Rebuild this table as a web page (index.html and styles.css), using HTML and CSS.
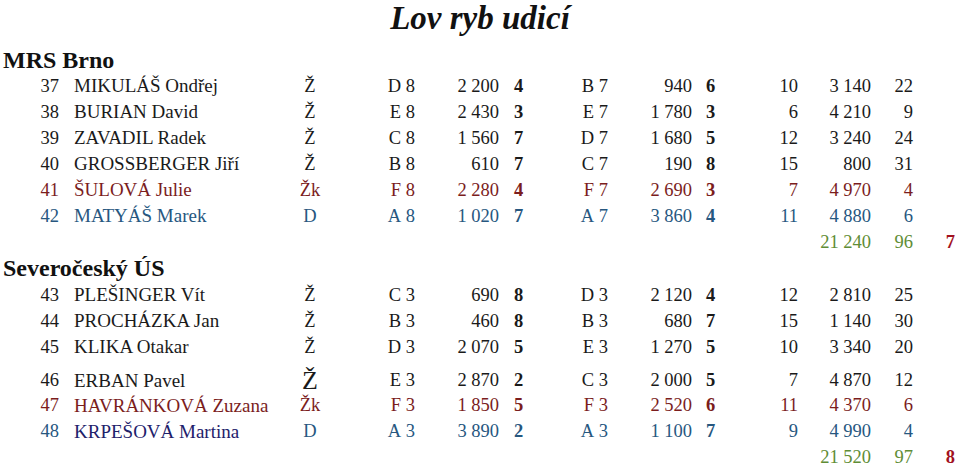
FILE: index.html
```html
<!DOCTYPE html>
<html lang="cs">
<head>
<meta charset="utf-8">
<title>Lov ryb udicí</title>
<link rel="stylesheet" href="styles.css">
</head>
<body>
<h1 class="title">Lov ryb udicí</h1>
<main class="results">
<div class="team">MRS Brno</div>
<div class="row k"><span class="r">37</span><span class="who">MIKULÁŠ Ondřej</span><span class="c">Ž</span><span class="r">D&nbsp;8</span><span class="r">2&nbsp;200</span><span class="pl">4</span><span class="r">B&nbsp;7</span><span class="r">940</span><span class="pl">6</span><span class="r">10</span><span class="r">3&nbsp;140</span><span class="r">22</span></div>
<div class="row k"><span class="r">38</span><span class="who">BURIAN David</span><span class="c">Ž</span><span class="r">E&nbsp;8</span><span class="r">2&nbsp;430</span><span class="pl">3</span><span class="r">E&nbsp;7</span><span class="r">1&nbsp;780</span><span class="pl">3</span><span class="r">6</span><span class="r">4&nbsp;210</span><span class="r">9</span></div>
<div class="row k"><span class="r">39</span><span class="who">ZAVADIL Radek</span><span class="c">Ž</span><span class="r">C&nbsp;8</span><span class="r">1&nbsp;560</span><span class="pl">7</span><span class="r">D&nbsp;7</span><span class="r">1&nbsp;680</span><span class="pl">5</span><span class="r">12</span><span class="r">3&nbsp;240</span><span class="r">24</span></div>
<div class="row k"><span class="r">40</span><span class="who">GROSSBERGER Jiří</span><span class="c">Ž</span><span class="r">B&nbsp;8</span><span class="r">610</span><span class="pl">7</span><span class="r">C&nbsp;7</span><span class="r">190</span><span class="pl">8</span><span class="r">15</span><span class="r">800</span><span class="r">31</span></div>
<div class="row w"><span class="r">41</span><span class="who">ŠULOVÁ Julie</span><span class="c">Žk</span><span class="r">F&nbsp;8</span><span class="r">2&nbsp;280</span><span class="pl">4</span><span class="r">F&nbsp;7</span><span class="r">2&nbsp;690</span><span class="pl">3</span><span class="r">7</span><span class="r">4&nbsp;970</span><span class="r">4</span></div>
<div class="row j"><span class="r">42</span><span class="who">MATYÁŠ Marek</span><span class="c">D</span><span class="r">A&nbsp;8</span><span class="r">1&nbsp;020</span><span class="pl">7</span><span class="r">A&nbsp;7</span><span class="r">3&nbsp;860</span><span class="pl">4</span><span class="r">11</span><span class="r">4&nbsp;880</span><span class="r">6</span></div>
<div class="row sum"><span class="r first">21&nbsp;240</span><span class="r">96</span><span class="rank">7</span></div>
<div class="team team2">Severočeský ÚS</div>
<div class="row k"><span class="r">43</span><span class="who">PLEŠINGER Vít</span><span class="c">Ž</span><span class="r">C&nbsp;3</span><span class="r">690</span><span class="pl">8</span><span class="r">D&nbsp;3</span><span class="r">2&nbsp;120</span><span class="pl">4</span><span class="r">12</span><span class="r">2&nbsp;810</span><span class="r">25</span></div>
<div class="row k"><span class="r">44</span><span class="who">PROCHÁZKA Jan</span><span class="c">Ž</span><span class="r">B&nbsp;3</span><span class="r">460</span><span class="pl">8</span><span class="r">B&nbsp;3</span><span class="r">680</span><span class="pl">7</span><span class="r">15</span><span class="r">1&nbsp;140</span><span class="r">30</span></div>
<div class="row k"><span class="r">45</span><span class="who">KLIKA Otakar</span><span class="c">Ž</span><span class="r">D&nbsp;3</span><span class="r">2&nbsp;070</span><span class="pl">5</span><span class="r">E&nbsp;3</span><span class="r">1&nbsp;270</span><span class="pl">5</span><span class="r">10</span><span class="r">3&nbsp;340</span><span class="r">20</span></div>
<div class="row k tall"><span class="r">46</span><span class="who">ERBAN Pavel</span><span class="c big">Ž</span><span class="r">E&nbsp;3</span><span class="r">2&nbsp;870</span><span class="pl">2</span><span class="r">C&nbsp;3</span><span class="r">2&nbsp;000</span><span class="pl">5</span><span class="r">7</span><span class="r">4&nbsp;870</span><span class="r">12</span></div>
<div class="row w tight"><span class="r">47</span><span class="who">HAVRÁNKOVÁ Zuzana</span><span class="c">Žk</span><span class="r">F&nbsp;3</span><span class="r">1&nbsp;850</span><span class="pl">5</span><span class="r">F&nbsp;3</span><span class="r">2&nbsp;520</span><span class="pl">6</span><span class="r">11</span><span class="r">4&nbsp;370</span><span class="r">6</span></div>
<div class="row j tight"><span class="r">48</span><span class="who navy">KRPEŠOVÁ Martina</span><span class="c">D</span><span class="r">A&nbsp;3</span><span class="r">3&nbsp;890</span><span class="pl">2</span><span class="r">A&nbsp;3</span><span class="r">1&nbsp;100</span><span class="pl">7</span><span class="r">9</span><span class="r">4&nbsp;990</span><span class="r">4</span></div>
<div class="row sum"><span class="r first">21&nbsp;520</span><span class="r">97</span><span class="rank">8</span></div>
</main>
</body>
</html>
```

FILE: styles.css
```css
html, body {
  margin: 0;
  padding: 0;
  background: #ffffff;
}
body {
  font-family: "Liberation Serif", serif;
  color: #1a1a1a;
  width: 960px;
  overflow: hidden;
}
.title {
  margin: 0;
  height: 47px;
  line-height: 36px;
  font-size: 33px;
  font-weight: bold;
  font-style: italic;
  text-align: center;
  color: #111111;
}
.results {
  display: block;
  font-family: "Liberation Serif", serif;
  font-size: 18.5px;
}
.row {
  display: grid;
  grid-template-columns: 59px 226px 50px 80px 84px 46px 63px 84px 48px 58px 73px 42px 47px;
  line-height: 26px;
  white-space: nowrap;
}
.row span { font-family: "Liberation Serif", serif; }
.r { text-align: right; }
.c { text-align: center; }
.row .who {
  padding-left: 15px;
  font-size: 19px;
}
.pl { padding-left: 15px; font-weight: bold; }
.pl:nth-child(9) { padding-left: 14px; }

.team {
  font-size: 24px;
  font-weight: bold;
  line-height: 26px;
  padding-left: 3px;
  color: #111111;
}
.team2 { line-height: 27px; }

.k { color: #1a1a1a; }
.w { color: #7b1d1d; }
.j { color: #27577f; }
.j .navy { color: #1e216b; }

.tall { padding-top: 8px; line-height: 25px; }
.tight { line-height: 25.5px; }
.big { font-size: 26px; line-height: 25px; }

.sum { color: #5f8d36; }
.sum .first { grid-column-start: 11; }
.rank {
  text-align: right;
  padding-right: 5px;
  font-weight: bold;
  color: #a2121f;
}
```
